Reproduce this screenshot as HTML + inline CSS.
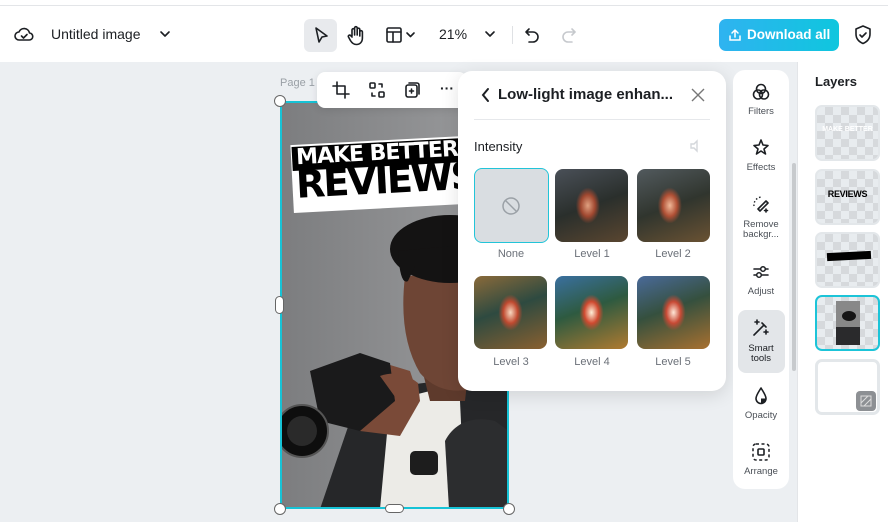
<!DOCTYPE html>
<html><head><meta charset="utf-8"><style>
*{box-sizing:border-box;margin:0;padding:0}
body{width:888px;height:522px;overflow:hidden;background:#eceff2;font-family:"Liberation Sans",sans-serif;position:relative;color:#1c1f23}
.abs{position:absolute}
.hdr{left:0;width:888px;background:#fff;border-top:1px solid #e3e5e8;top:5px;height:57px}
.top0{left:0;top:0;width:888px;height:5px;background:#fff}
.ic{stroke:#1c1f23;fill:none;stroke-width:1.6;stroke-linecap:round;stroke-linejoin:round}
.panel{left:458px;top:71px;width:268px;height:320px;background:#fff;border-radius:14px;box-shadow:0 4px 18px rgba(0,0,0,.12)}
.th{position:absolute;width:73px;height:73px;border-radius:8px;overflow:hidden}
.lbl{position:absolute;font-size:11px;color:#6b7078;width:80px;text-align:center}
.strip{left:733px;top:70px;width:56px;height:419px;background:#fff;border-radius:12px}
.ti{position:absolute;left:0;width:56px;text-align:center;font-size:9.5px;color:#4a4f56;line-height:10px}
.layers{left:797px;top:62px;width:91px;height:460px;background:#fff;border-left:1px solid #e3e5e8}
.ly{position:absolute;left:17px;width:65px;height:56px;border-radius:7px;background-color:#e8ecef;border:2px solid #e3e7ea;
background-image:linear-gradient(45deg,#d6d9dc 25%,transparent 25%,transparent 75%,#d6d9dc 75%),linear-gradient(45deg,#d6d9dc 25%,transparent 25%,transparent 75%,#d6d9dc 75%);background-size:16px 16px;background-position:0 0,8px 8px}
.h{position:absolute;width:12px;height:12px;border-radius:50%;background:#fff;border:1px solid #666}
</style></head><body>
<div class="abs top0"></div>
<div class="abs hdr">
<svg class="abs" style="left:14px;top:19px" width="20" height="20" viewBox="0 0 20 20"><path class="ic" d="M5 15h10a3.5 3.5 0 0 0 .5-7A5.5 5.5 0 0 0 5 7a4 4 0 0 0 0 8z"/><path class="ic" d="M7.5 11l2 2 3.5-3.5"/></svg>
<div class="abs" style="left:51px;top:20px;font-size:14px">Untitled image</div>
<svg class="abs" style="left:159px;top:23px" width="12" height="10"><path class="ic" d="M2 3l4 4 4-4"/></svg>
<div class="abs" style="left:304px;top:13px;width:33px;height:33px;background:#e8eaed;border-radius:6px"></div>
<svg class="abs" style="left:312px;top:20px" width="18" height="20"><path class="ic" d="M4 2l11 8-5 1-3 5z"/></svg>
<svg class="abs" style="left:346px;top:19px" width="20" height="22" viewBox="0 0 20 22"><path class="ic" d="M6 11V5a1.3 1.3 0 0 1 2.6 0v5V3a1.3 1.3 0 0 1 2.6 0v7V4.5a1.3 1.3 0 0 1 2.6 0V11V7a1.3 1.3 0 0 1 2.6 0v6c0 4-2.5 6.5-6 6.5-3 0-4.5-1.5-6-4L2.5 12a1.3 1.3 0 0 1 2-1.6L6 12"/></svg>
<svg class="abs" style="left:385px;top:20px" width="32" height="18"><rect class="ic" x="2" y="2" width="14" height="14" rx="1.5"/><path class="ic" d="M2 6h14M8 6v10M22 7l3.5 3.5L29 7"/></svg>
<div class="abs" style="left:439px;top:20px;font-size:14px">21%</div>
<svg class="abs" style="left:484px;top:23px" width="12" height="10"><path class="ic" d="M2 3l4 4 4-4"/></svg>
<div class="abs" style="left:512px;top:20px;width:1px;height:18px;background:#dfe1e4"></div>
<svg class="abs" style="left:523px;top:20px" width="20" height="18"><path class="ic" d="M6 3L3 6l3 3M3 6h7a5 5 0 0 1 0 10H6"/></svg>
<svg class="abs" style="left:559px;top:20px" width="20" height="18"><path d="M13 3l3 3-3 3M16 6H9a5 5 0 0 0 0 10h4" stroke="#c6c9cd" fill="none" stroke-width="1.6" stroke-linecap="round"/></svg>
<div class="abs" style="left:719px;top:13px;width:120px;height:32px;border-radius:7px;background:linear-gradient(90deg,#2fb3f0,#0fc6de);color:#fff;font-size:13.5px;font-weight:bold;line-height:32px;padding-left:28px">Download all</div>
<svg class="abs" style="left:727px;top:21px" width="16" height="16"><path d="M8 10V3M5 6l3-3 3 3M3 9v4h10V9" stroke="#fff" fill="none" stroke-width="1.5" stroke-linecap="round"/></svg>
<svg class="abs" style="left:853px;top:18px" width="20" height="22"><path class="ic" d="M10 2l7 3v5c0 5-3.5 8-7 9.5C6.5 18 3 15 3 10V5z"/><path class="ic" d="M7 11l2 2 4-4"/></svg>
</div>

<div class="abs" style="left:280px;top:77px;font-size:11px;color:#9aa0a6">Page 1</div>

<!-- photo -->
<div class="abs" style="left:280px;top:101px;width:229px;height:408px;border:2px solid #16c3d6;overflow:hidden;background:#8d8e90">
<svg width="229" height="408" viewBox="0 0 229 408" style="position:absolute;left:-2px;top:-2px">
<defs><linearGradient id="bg" x1="0" x2="1"><stop offset="0" stop-color="#7c7d7f"/><stop offset="1" stop-color="#9c9d9f"/></linearGradient></defs>
<rect width="229" height="408" fill="url(#bg)"/>
<!-- jacket -->
<path d="M40 408L70 320 120 285 175 278 229 285 229 408z" fill="#262729"/>
<!-- shirt -->
<path d="M110 300L150 290 180 300 185 408 100 408z" fill="#ecebe7"/>
<!-- neck -->
<path d="M140 260L190 255 185 300 150 300z" fill="#5e3a2c"/>
<!-- face -->
<path d="M125 175Q118 235 140 272Q160 295 192 288Q218 270 229 235V170Z" fill="#6e4535"/>
<!-- hair -->
<ellipse cx="170" cy="148" rx="60" ry="34" fill="#141313"/>
<path d="M118 150Q120 185 128 180L135 165 229 165 229 140z" fill="#141313"/>
<!-- hands -->
<path d="M40 275Q60 255 90 258L130 270 140 300 120 335 80 330 45 310z" fill="#7a4a38"/>
<!-- camera -->
<path d="M30 270L80 252 110 262 115 300 80 330 40 320z" fill="#1a1a1b"/>
<circle cx="22" cy="330" r="26" fill="#0e0e0e" stroke="#555" stroke-width="2"/>
<circle cx="22" cy="330" r="15" fill="#2a2a2a"/>
<path d="M100 275Q120 268 138 282L140 300 118 300z" fill="#7a4a38"/>
<rect x="130" y="350" width="28" height="24" rx="5" fill="#1d1d1d"/>
<path d="M165 340c10-20 30-25 50-20l14 10v78h-60z" fill="#2c2d2f"/>
</svg>
<div class="abs" style="left:10px;top:36px;width:230px;height:68px;background:#fff;transform:rotate(-3deg)"></div>
<div class="abs" style="left:10px;top:38px;width:230px;height:24px;background:#000;transform:rotate(-3deg)"></div>
<div class="abs" style="left:14px;top:38px;font-family:'DejaVu Sans';font-weight:bold;font-size:22px;color:#fff;transform:rotate(-3deg);letter-spacing:-1px;white-space:nowrap">MAKE BETTER</div>
<div class="abs" style="left:14px;top:55px;font-family:'DejaVu Sans';font-weight:bold;font-size:38px;color:#000;transform:rotate(-3deg);letter-spacing:-2px;white-space:nowrap">REVIEWS</div>
</div>
<div class="h" style="left:274px;top:95px"></div>
<div class="h" style="left:274px;top:503px"></div>
<div class="h" style="left:503px;top:503px"></div>
<div class="abs" style="left:275px;top:296px;width:9px;height:18px;border-radius:5px;background:#fff;border:1px solid #666"></div>
<div class="abs" style="left:385px;top:504px;width:19px;height:9px;border-radius:5px;background:#fff;border:1px solid #666"></div>

<!-- mini toolbar -->
<div class="abs" style="left:317px;top:72px;width:150px;height:36px;background:#fff;border-radius:8px;box-shadow:0 2px 8px rgba(0,0,0,.1)"></div>
<svg class="abs" style="left:332px;top:81px" width="18" height="18"><path class="ic" d="M5 1v12h12M1 5h12v12"/></svg>
<svg class="abs" style="left:368px;top:81px" width="18" height="18"><rect class="ic" x="2" y="2" width="5" height="5" rx="1"/><rect class="ic" x="11" y="11" width="5" height="5" rx="1"/><path class="ic" d="M11 3h3v3M7 15H4v-3"/></svg>
<svg class="abs" style="left:403px;top:81px" width="18" height="18"><rect class="ic" x="3" y="4" width="11" height="12" rx="2"/><path class="ic" d="M6 2h8a2 2 0 0 1 2 2v9M8.5 8v4M6.5 10h4"/></svg>
<div class="abs" style="left:440px;top:80px;font-size:14px;font-weight:bold">···</div>

<!-- panel -->
<div class="abs panel">
<svg class="abs" style="left:22px;top:16px" width="12" height="16"><path d="M8 2L3 8l5 6" stroke="#1c1f23" fill="none" stroke-width="2" stroke-linecap="round"/></svg>
<div class="abs" style="left:40px;top:15px;font-size:15px;font-weight:bold">Low-light image enhan...</div>
<svg class="abs" style="left:233px;top:17px" width="14" height="14"><path d="M1 1l12 12M13 1L1 13" stroke="#777" stroke-width="1.4"/></svg>
<div class="abs" style="left:16px;top:48px;width:236px;height:1px;background:#e6e8eb"></div>
<div class="abs" style="left:16px;top:68px;font-size:13px">Intensity</div>
<svg class="abs" style="left:230px;top:68px" width="14" height="14"><path d="M3 5h3l3-3v10L6 9H3z" stroke="#d4d7db" fill="none" stroke-width="1.4"/></svg>
<div class="th" style="left:16px;top:97px;width:75px;height:75px;border:1.5px solid #22c4d8;background:#d9dde1"></div>
<svg class="abs" style="left:43px;top:125px" width="20" height="20"><circle cx="10" cy="10" r="8" stroke="#9aa0a6" fill="none" stroke-width="1.5"/><path d="M4.5 4.5l11 11" stroke="#9aa0a6" stroke-width="1.5"/></svg>
<div class="th" style="left:97px;top:98px;background:radial-gradient(ellipse 12px 18px at 45% 50%,#e0a080 0,#a04830 60%,transparent 100%),linear-gradient(160deg,#4a5058 0,#2a2f2c 50%,#5a4630 100%)"></div>
<div class="th" style="left:179px;top:98px;background:radial-gradient(ellipse 12px 18px at 45% 50%,#f0b898 0,#b05035 60%,transparent 100%),linear-gradient(160deg,#525a5e 0,#30352e 50%,#6a5233 100%)"></div>
<div class="th" style="left:16px;top:205px;background:radial-gradient(ellipse 12px 18px at 50% 50%,#f8d8c0 0,#c04a30 60%,transparent 100%),linear-gradient(160deg,#8a6a3a 0,#2e4a40 45%,#8a6030 100%)"></div>
<div class="th" style="left:97px;top:205px;background:radial-gradient(ellipse 12px 18px at 50% 50%,#fff0d8 0,#d04a30 60%,transparent 100%),linear-gradient(160deg,#3a70a0 0,#2e5a40 45%,#b07a30 100%)"></div>
<div class="th" style="left:179px;top:205px;background:radial-gradient(ellipse 12px 18px at 50% 50%,#ffe8d8 0,#c84a35 60%,transparent 100%),linear-gradient(160deg,#4a6a9a 0,#35503e 45%,#a87030 100%)"></div>
<div class="lbl" style="left:13px;top:177px">None</div>
<div class="lbl" style="left:94px;top:177px">Level 1</div>
<div class="lbl" style="left:175px;top:177px">Level 2</div>
<div class="lbl" style="left:13px;top:285px">Level 3</div>
<div class="lbl" style="left:94px;top:285px">Level 4</div>
<div class="lbl" style="left:175px;top:285px">Level 5</div>
</div>

<!-- tool strip -->
<div class="abs strip">
<svg class="abs" style="left:18px;top:12px" width="20" height="20"><circle class="ic" cx="10" cy="7" r="4.5"/><circle class="ic" cx="7" cy="12.5" r="4.5"/><circle class="ic" cx="13" cy="12.5" r="4.5"/></svg>
<div class="ti" style="top:37px">Filters</div>
<svg class="abs" style="left:18px;top:68px" width="20" height="20"><path class="ic" d="M10 2l2 5 5 .5-4 3.5 1.5 5L10 13l-4.5 3L7 11 3 7.5 8 7z"/></svg>
<div class="ti" style="top:93px">Effects</div>
<svg class="abs" style="left:18px;top:124px" width="20" height="20"><path d="M3 12a8 8 0 0 1 8-9" stroke="#1c1f23" stroke-dasharray="1.5 2" fill="none" stroke-width="1.4"/><path class="ic" d="M7 15l8-8 2 2-8 8z M15 15v3M13.5 16.5h3"/></svg>
<div class="ti" style="top:150px">Remove<br>backgr...</div>
<svg class="abs" style="left:18px;top:192px" width="20" height="20"><path class="ic" d="M3 7h14M3 13h14"/><circle cx="12" cy="7" r="2.3" fill="#fff" stroke="#1c1f23" stroke-width="1.5"/><circle cx="8" cy="13" r="2.3" fill="#fff" stroke="#1c1f23" stroke-width="1.5"/></svg>
<div class="ti" style="top:217px">Adjust</div>
<div class="abs" style="left:5px;top:240px;width:47px;height:63px;background:#e3e6e9;border-radius:8px"></div>
<svg class="abs" style="left:18px;top:248px" width="20" height="20"><path class="ic" d="M3 17L13 7M11 5l4 4M6 2v4M4 4h4M15 12v4M13 14h4"/></svg>
<div class="ti" style="top:274px;color:#1c1f23">Smart<br>tools</div>
<svg class="abs" style="left:18px;top:316px" width="20" height="20"><path class="ic" d="M10 2C7 7 5 9.5 5 12.5a5 5 0 0 0 10 0C15 9.5 13 7 10 2z"/><path d="M10 17.5a5 5 0 0 0 5-5H10z" fill="#1c1f23"/></svg>
<div class="ti" style="top:341px">Opacity</div>
<svg class="abs" style="left:18px;top:372px" width="20" height="20"><rect x="2" y="2" width="16" height="16" rx="3" stroke="#1c1f23" stroke-dasharray="3 2.5" fill="none" stroke-width="1.5"/><rect class="ic" x="7" y="7" width="6" height="6" rx="1"/></svg>
<div class="ti" style="top:397px">Arrange</div>
</div>
<div class="abs" style="left:792px;top:163px;width:4px;height:208px;border-radius:2px;background:#c7cacd"></div>

<!-- layers -->
<div class="abs layers">
<div class="abs" style="left:17px;top:12px;font-size:13px;font-weight:bold">Layers</div>
<div class="ly" style="top:43px"><div style="margin-top:19px;text-align:center;font-size:7px;font-weight:bold;color:#fff">MAKE BETTER</div></div>
<div class="ly" style="top:107px"><div style="margin-top:18px;text-align:center;font-size:9px;font-weight:900;color:#000;letter-spacing:-.3px">REVIEWS</div></div>
<div class="ly" style="top:170px"><div style="margin:18px 0 0 10px;width:44px;height:8px;background:#000;transform:rotate(-3deg)"></div></div>
<div class="ly" style="top:233px;border-color:#1cc4d8"><div style="margin:4px 0 0 19px;width:24px;height:44px;background:#888;position:relative"><div style="position:absolute;left:6px;top:10px;width:14px;height:10px;border-radius:50%;background:#151414"></div><div style="position:absolute;left:0;top:26px;width:24px;height:18px;background:#2a2a2c"></div></div></div>
<div class="abs" style="left:17px;top:297px;width:65px;height:56px;border-radius:7px;background:#fff;border:3px solid #e3e7ea"></div>
<div class="abs" style="left:58px;top:329px;width:20px;height:20px;border-radius:4px;background:#8d9094"></div>
<svg class="abs" style="left:62px;top:333px" width="12" height="12"><rect x="1" y="1" width="10" height="10" stroke="#ddd" fill="none"/><path d="M1 8l7-7M4 11l7-7" stroke="#ddd"/></svg>
</div>
</body></html>
